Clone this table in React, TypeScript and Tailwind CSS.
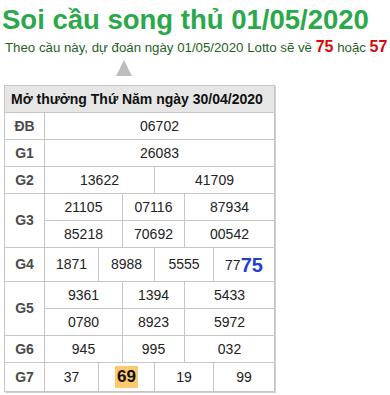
import React from "react";

const Cell = ({ className = "", children }: { className?: string; children?: React.ReactNode }) => (
  <div className={`bg-white flex items-center justify-center text-[14px] text-[#222] ${className}`}>{children}</div>
);

const Label = ({ className = "", children }: { className?: string; children?: React.ReactNode }) => (
  <div className={`bg-white flex items-center justify-center text-[14px] font-bold text-[#4a4a4a] ${className}`}>{children}</div>
);

export default function App() {
  return (
    <div className="w-[390px] h-[395px] bg-white overflow-hidden" style={{ fontFamily: '"Liberation Sans", Arial, sans-serif' }}>
      <div className="pt-[2px] pl-[2px] h-[38px] text-[27.5px] leading-[36px] font-bold text-[#2aa84a] whitespace-nowrap">
        Soi cầu song thủ 01/05/2020
      </div>
      <div className="pl-[5px] h-[18px] text-[13.25px] leading-[18px] text-[#1d5f1d] whitespace-nowrap">
        Theo cầu này, dự đoán ngày 01/05/2020 Lotto sẽ về{" "}
        <span className="text-[16px] leading-[18px] font-bold text-[#d60a0a]">75</span> hoặc{" "}
        <span className="text-[16px] leading-[18px] font-bold text-[#d60a0a]">57</span>
      </div>
      <div className="pl-[116px] pt-[4px] h-[29px]">
        <svg width="16" height="16" viewBox="0 0 16 16">
          <polygon points="8,0 16,16 0,16" fill="#bdbdbd" />
        </svg>
      </div>
      <div className="ml-[4px] w-[271px] grid gap-px p-px bg-[#c6c6c6] shadow-[1px_1px_0_#cfcfcf] grid-cols-[39px_53px_23px_31px_29px_28px_60px] grid-rows-[26px_26px_26px_26px_26px_26px_33px_26px_26px_26px_28px]">
        <div className="col-span-7 bg-[#e6e6e6] flex items-center pl-[6px] text-[14px] font-bold text-[#111]">
          Mở thưởng Thứ Năm ngày 30/04/2020
        </div>

        <Label>ĐB</Label>
        <Cell className="col-span-6">06702</Cell>

        <Label>G1</Label>
        <Cell className="col-span-6">26083</Cell>

        <Label>G2</Label>
        <Cell className="col-span-3">13622</Cell>
        <Cell className="col-span-3">41709</Cell>

        <Label className="row-span-2">G3</Label>
        <Cell className="col-span-2">21105</Cell>
        <Cell className="col-span-2">07116</Cell>
        <Cell className="col-span-2">87934</Cell>
        <Cell className="col-span-2">85218</Cell>
        <Cell className="col-span-2">70692</Cell>
        <Cell className="col-span-2">00542</Cell>

        <Label>G4</Label>
        <Cell>1871</Cell>
        <Cell className="col-span-2">8988</Cell>
        <Cell className="col-span-2">5555</Cell>
        <Cell>
          <span className="leading-[20px]">77</span>
          <span className="text-[20px] leading-[20px] font-bold text-[#1e3fd0]">75</span>
        </Cell>

        <Label className="row-span-2">G5</Label>
        <Cell className="col-span-2">9361</Cell>
        <Cell className="col-span-2">1394</Cell>
        <Cell className="col-span-2">5433</Cell>
        <Cell className="col-span-2">0780</Cell>
        <Cell className="col-span-2">8923</Cell>
        <Cell className="col-span-2">5972</Cell>

        <Label>G6</Label>
        <Cell className="col-span-2">945</Cell>
        <Cell className="col-span-2">995</Cell>
        <Cell className="col-span-2">032</Cell>

        <Label>G7</Label>
        <Cell>37</Cell>
        <Cell className="col-span-2">
          <span className="bg-[#fcc870] px-[2px] text-[17px] leading-[22px] font-bold text-[#111]">69</span>
        </Cell>
        <Cell className="col-span-2">19</Cell>
        <Cell>99</Cell>
      </div>
    </div>
  );
}
